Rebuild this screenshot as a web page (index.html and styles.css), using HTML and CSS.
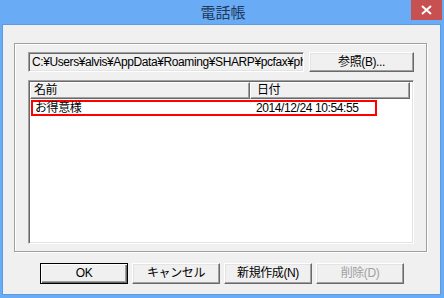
FILE: index.html
```html
<!DOCTYPE html>
<html>
<head>
  <meta charset="UTF-8">
  <meta name="viewport" content="width=device-width, initial-scale=1.0">
  <title>電話帳</title>
  <link rel="stylesheet" href="styles.css">
</head>
<body>
  <div class="window">
    <div class="titlebar">
      <span class="title">電話帳</span>
      <div class="close-button">
        <svg width="11" height="10" viewBox="0 0 11 10">
          <path d="M1 1 L10 9 M10 1 L1 9" stroke="#fff" stroke-width="2" fill="none"/>
        </svg>
      </div>
    </div>

    <div class="client">
      <div class="group-box">
        <div class="path-row">
          <div class="path-edit">C:¥Users¥alvis¥AppData¥Roaming¥SHARP¥pcfax¥ph</div>
          <button class="win-button browse-button">参照(B)...</button>
        </div>

        <div class="list-view">
          <div class="list-header">
            <div class="header-item col-name">名前</div>
            <div class="header-item col-date">日付</div>
          </div>
          <div class="list-row selected">
            <span class="cell col-name">お得意様</span>
            <span class="cell col-date">2014/12/24 10:54:55</span>
          </div>
        </div>
      </div>

      <div class="button-row">
        <button class="win-button default-button">OK</button>
        <button class="win-button">キャンセル</button>
        <button class="win-button">新規作成(N)</button>
        <button class="win-button" disabled>削除(D)</button>
      </div>
    </div>
  </div>
</body>
</html>
```

FILE: styles.css
```css
body {
  margin: 0;
  width: 444px;
  height: 298px;
  overflow: hidden;
  font-family: "Liberation Sans", "Noto Sans CJK JP", sans-serif;
  font-size: 12px;
  letter-spacing: -0.4px;
  color: #000;
}

.window {
  width: 444px;
  height: 298px;
  box-sizing: border-box;
  background-color: #6aabf5;
  display: flex;
  flex-direction: column;
  padding: 0 4px 4px 3px;
}

/* Title bar */
.titlebar {
  position: relative;
  height: 25px;
  display: flex;
  align-items: center;
  justify-content: center;
}

.title {
  font-family: "Noto Sans CJK JP", sans-serif;
  font-size: 15px;
  letter-spacing: 0;
  color: #1f3a5c;
  margin-top: -2px;
  margin-left: 3px;
}

.close-button {
  position: absolute;
  top: 0;
  right: -2px;
  width: 31px;
  height: 20px;
  background-color: #c75050;
  display: flex;
  align-items: center;
  justify-content: center;
}

/* Client area */
.client {
  flex: 1;
  background-color: #f0f0f0;
  box-shadow: 0 0 0 1px #5f9be2;
  padding: 18px 13px 0 11px;
}

.group-box {
  height: 209px;
  box-sizing: border-box;
  border: 1px solid #a0a0a0;
  box-shadow: 1px 1px 0 #fff, inset 1px 1px 0 #fff;
  padding: 8px 12px 0 13px;
}

.path-row {
  display: flex;
  gap: 5px;
  height: 20px;
}

.path-edit {
  flex: 1;
  min-width: 0;
  box-sizing: border-box;
  background-color: #f0f0f0;
  border-top: 1px solid #a0a0a0;
  border-left: 1px solid #a0a0a0;
  border-bottom: 1px solid #fff;
  border-right: 1px solid #fff;
  box-shadow: inset 1px 1px 0 #696969, inset -1px -1px 0 #e3e3e3;
  padding: 2px 0 0 3px;
  white-space: nowrap;
  overflow: hidden;
  line-height: 15px;
}

.win-button {
  font-family: "Liberation Sans", "Noto Sans CJK JP", sans-serif;
  font-size: 12px;
  letter-spacing: -0.4px;
  color: #000;
  background-color: #f0f0f0;
  box-sizing: border-box;
  border-top: 1px solid #fff;
  border-left: 1px solid #fff;
  border-bottom: 1px solid #696969;
  border-right: 1px solid #696969;
  box-shadow: inset -1px -1px 0 #a0a0a0, inset 1px 1px 0 #e3e3e3;
  padding: 0;
  margin: 0;
  line-height: 15px;
}

.win-button:disabled {
  color: #a0a0a0;
}

.browse-button {
  width: 105px;
  height: 20px;
  flex-shrink: 0;
}

.default-button {
  border: 1px solid #000;
  box-shadow: inset 1px 1px 0 #fff, inset -1px -1px 0 #696969, inset -2px -2px 0 #a0a0a0;
}

/* List view */
.list-view {
  margin-top: 8px;
  height: 164px;
  box-sizing: border-box;
  background-color: #fff;
  border-top: 1px solid #a0a0a0;
  border-left: 1px solid #a0a0a0;
  border-bottom: 1px solid #fff;
  border-right: 1px solid #fff;
  box-shadow: inset 1px 1px 0 #696969, inset -1px -1px 0 #e3e3e3;
  padding: 1px 0 0 1px;
}

.list-header {
  display: flex;
  height: 17px;
}

.header-item {
  box-sizing: border-box;
  background-color: #f0f0f0;
  border-top: 1px solid #fff;
  border-left: 1px solid #fff;
  border-bottom: 1px solid #696969;
  border-right: 1px solid #696969;
  box-shadow: inset -1px -1px 0 #a0a0a0;
  padding-left: 4px;
  line-height: 14px;
}

.header-item.col-name {
  width: 220px;
  padding-left: 3px;
}

.header-item.col-date {
  width: 160px;
  padding-left: 6px;
}

.list-row {
  display: flex;
  width: 346px;
  height: 16px;
  box-sizing: border-box;
  margin-top: 1px;
  margin-left: 1px;
  line-height: 12px;
}

.list-row.selected {
  border: 2px solid #f00;
}

.cell.col-name {
  width: 219px;
  padding-left: 2px;
  box-sizing: border-box;
}

.cell.col-date {
  padding-left: 4px;
}

/* Bottom buttons */
.button-row {
  display: flex;
  gap: 4px;
  margin-top: 11px;
  margin-left: 26px;
}

.button-row .win-button {
  width: 88px;
  height: 21px;
}
```
